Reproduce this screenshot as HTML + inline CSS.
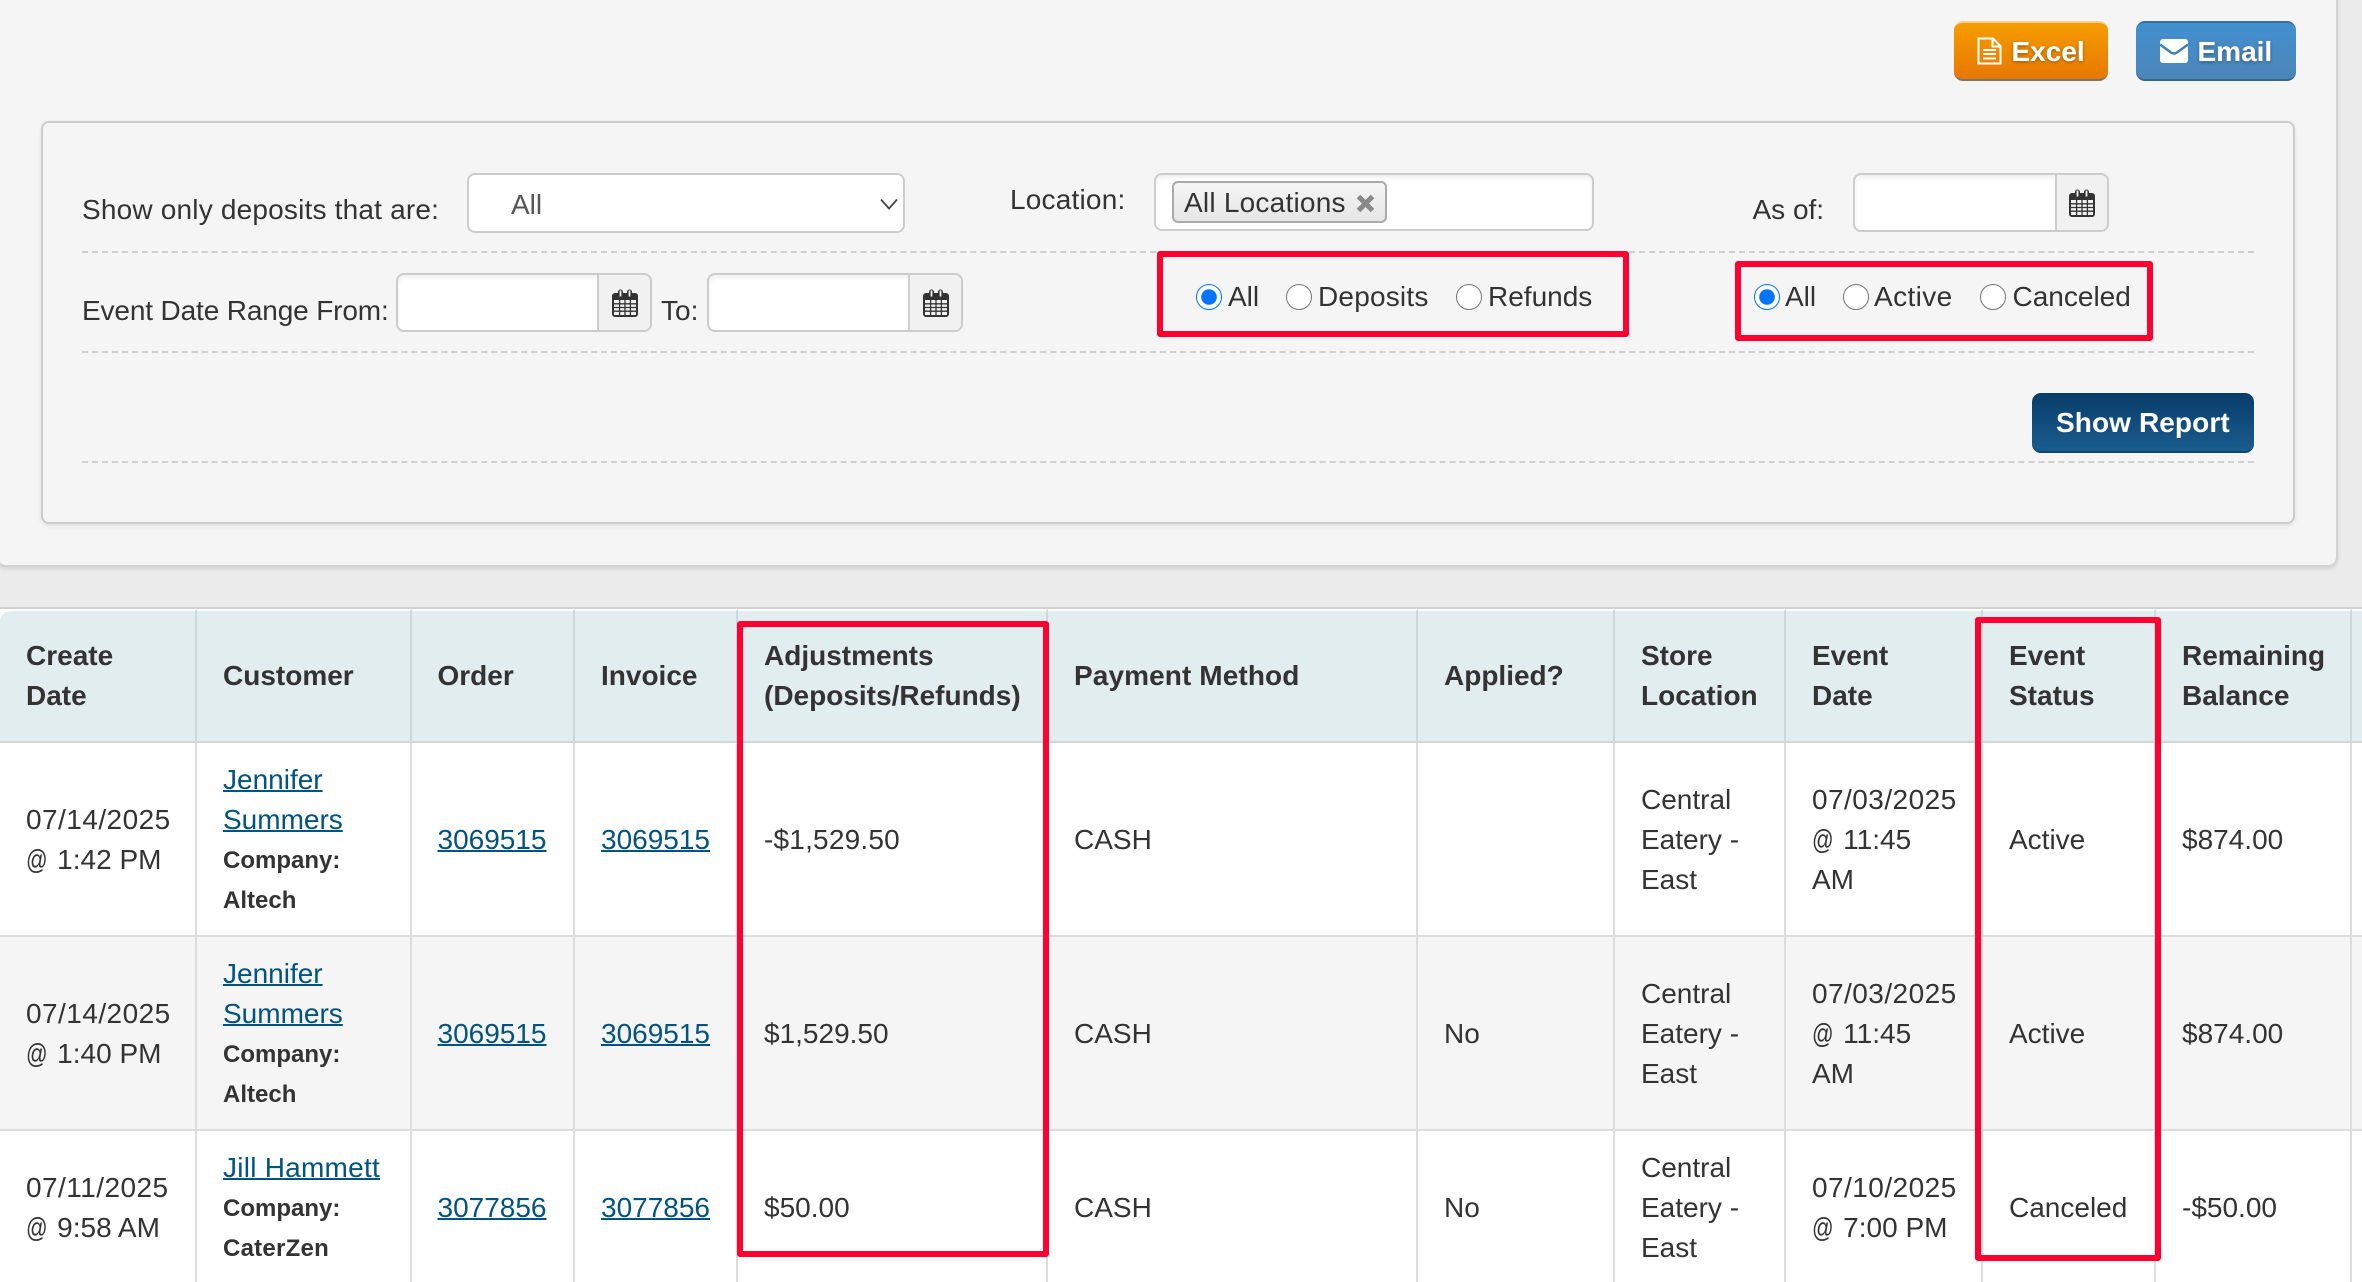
<!DOCTYPE html>
<html lang="en">
<head>
<meta charset="utf-8">
<title>Deposits Report</title>
<style>
html,body{margin:0;padding:0;width:2362px;height:1282px;overflow:hidden;background:#ebebeb}
body{position:relative;font-family:"Liberation Sans",Helvetica,Arial,sans-serif;font-size:28px;line-height:40px;color:#333}
.abs{position:absolute}
.t{position:absolute;white-space:nowrap;line-height:40px}
#panel{position:absolute;left:-4px;top:-4px;width:2338px;height:567px;background:#f5f5f5;border:2px solid #d2d2d2;border-radius:0 0 10px 10px;box-shadow:0 2px 5px rgba(0,0,0,.1)}
#box{position:absolute;left:41px;top:121px;width:2250px;height:399px;background:#f5f5f5;border:2px solid #ccc;border-radius:8px;box-shadow:0 2px 5px rgba(0,0,0,.08)}
.btn{position:absolute;box-sizing:border-box;height:60px;border-radius:9px;color:#fff;font-weight:bold;text-shadow:0 1px 3px rgba(0,0,0,.4),0 0 1px rgba(255,255,255,.5)}
.input{position:absolute;box-sizing:border-box;background:#fff;border:2px solid #ccc;border-radius:8px;box-shadow:inset 0 3px 4px rgba(0,0,0,.06)}
.addon{position:absolute;top:0;right:0;bottom:0;background:#f1f1f1;border-left:2px solid #ccc;border-radius:0 6px 6px 0}
.addon svg{position:absolute;left:50%;top:50%;margin:-14px 0 0 -13px}
.dash{position:absolute;left:82px;width:2172px;height:0;border-top:2px dashed #cfcfcf}
input[type=radio]{position:absolute;margin:0;width:26px;height:26px;accent-color:#0075ff}
.red{position:absolute;box-sizing:border-box;border:6px solid #ff0030;border-radius:3px;z-index:5}
#tw{position:absolute;left:0;top:607px;width:2362px;height:675px;overflow:hidden;border-top:2px solid #d0d0d0;box-sizing:border-box}
table{border-collapse:separate;border-spacing:0;table-layout:fixed;width:2362px;background:#fff}
th,td{box-sizing:border-box;text-align:left;vertical-align:middle;padding:1px 8px 0 26px;line-height:40px}
th{height:134px;padding:0 8px 1px 26px;background:#e2edef;border-top:2px solid #fff;border-right:2px solid #ccd8da;border-bottom:2px solid #ccd8da;font-weight:bold}
th:first-child{border-top-left-radius:12px}
td{border-right:2px solid #ddd;border-bottom:2px solid #ddd}
th:nth-child(3),td:nth-child(3){padding-left:25.5px}
tr.a td{height:194px;background:#fff}
tr.b td{height:194px;background:#f5f5f5}
tr.c td{height:152px;background:#fff;border-bottom:0}
th:last-child,td:last-child{border-right:0}
td a{color:#00547f;text-decoration:underline;text-decoration-thickness:2px}
td b{font-size:24px;display:block;position:relative;top:1px}
.d{letter-spacing:.45px}
.at{display:inline-block;width:23.4px;transform:scaleX(.76);transform-origin:0 50%}
</style>
</head>
<body>
<svg width="0" height="0" style="position:absolute">
<symbol id="cal" viewBox="0 0 26 28">
<path fill="#333" d="M3 4h3V3a2.5 2.5 0 0 1 5 0v1h4V3a2.5 2.5 0 0 1 5 0v1h3a3 3 0 0 1 3 3v18a3 3 0 0 1-3 3H3a3 3 0 0 1-3-3V7a3 3 0 0 1 3-3z"/>
<path fill="#f1f1f1" d="M7.6 1.5h1.8v6H7.6zM16.6 1.5h1.8v6h-1.8z"/>
<path fill="#f1f1f1" d="M2 11h22v15H2z"/>
<path stroke="#333" stroke-width="1.3" fill="none" d="M7.6 11v15M13 11v15M18.4 11v15M2 14.8h22M2 18.5h22M2 22.2h22"/>
</symbol>
</svg>

<div id="panel"></div>

<div class="btn" style="left:1954px;top:21px;width:154px;background:linear-gradient(#f59d00,#e77800);border-top:2px solid #f8cf8e;border-bottom:2px solid #7d7468">
<svg class="abs" style="left:23px;top:14px" width="25" height="28" viewBox="0 0 25 28" fill="none" stroke="#fff" stroke-width="2"><path d="M1.5 1.5h14.5l7.5 7.5v17.5h-22z"/><path d="M15.5 1.5v8h8"/><path d="M6 13h13M6 17h13M6 21.500h13"/></svg>
<span class="t" style="left:57.500px;top:8.500px">Excel</span></div>

<div class="btn" style="left:2136px;top:21px;width:160px;background:linear-gradient(#4290d0,#4d85b8);border-top:2px solid #3a6e9e;border-bottom:2px solid #36658f">
<svg class="abs" style="left:24px;top:16px" width="28" height="24" viewBox="0 0 28 24"><rect width="28" height="24" rx="3" fill="#fff"/><path d="M0 5.500L11 13.500Q14 15.500 17 13.500L28 5.500" fill="none" stroke="#3f7fb5" stroke-width="2.500"/></svg>
<span class="t" style="left:61.500px;top:8.500px">Email</span></div>

<div id="box"></div>

<span class="t" style="left:82px;top:189.500px;letter-spacing:.19px">Show only deposits that are:</span>
<div class="input" style="left:467px;top:173px;width:438px;height:60px;box-shadow:none">
<span class="t" style="left:42px;top:10px;color:#555">All</span>
<svg class="abs" style="left:411px;top:23px" width="18" height="12" viewBox="0 0 18 12"><path d="M1 1.500L9 10.500L17 1.500" fill="none" stroke="#444" stroke-width="1.800"/></svg>
</div>

<span class="t" style="left:1010px;top:179.500px;letter-spacing:.2px">Location:</span>
<div class="input" style="left:1154px;top:173px;width:440px;height:58px">
<div class="abs" style="left:16px;top:6px;width:215px;height:42px;box-sizing:border-box;background:linear-gradient(#f5f5f5,#e6e6e6);border:2px solid #aaa;border-radius:6px">
<span class="t" style="left:10px;top:-.5px;letter-spacing:.23px">All Locations</span>
<svg class="abs" style="left:182px;top:11px" width="19" height="19" viewBox="0 0 19 19"><path d="M2.500 2.500L16.500 16.500M16.500 2.500L2.500 16.500" stroke="#888" stroke-width="5"/></svg>
</div></div>

<span class="t" style="left:1752.500px;top:190px">As of:</span>
<div class="input" style="left:1853px;top:173px;width:256px;height:59px"><div class="addon" style="width:50px"><svg width="26" height="28"><use href="#cal"/></svg></div></div>

<div class="dash" style="top:251px"></div>

<span class="t" style="left:82px;top:290.500px;letter-spacing:-.14px">Event Date Range From:</span>
<div class="input" style="left:396px;top:273px;width:256px;height:59px"><div class="addon" style="width:51px"><svg width="26" height="28"><use href="#cal"/></svg></div></div>
<span class="t" style="left:661px;top:290.500px">To:</span>
<div class="input" style="left:707px;top:273px;width:256px;height:59px"><div class="addon" style="width:51px"><svg width="26" height="28"><use href="#cal"/></svg></div></div>

<input type="radio" name="r1" checked style="left:1196px;top:284px">
<span class="t" style="left:1228px;top:277px">All</span>
<input type="radio" name="r1" style="left:1286px;top:284px">
<span class="t" style="left:1318px;top:277px;letter-spacing:.2px">Deposits</span>
<input type="radio" name="r1" style="left:1456px;top:284px">
<span class="t" style="left:1488px;top:277px">Refunds</span>

<input type="radio" name="r2" checked style="left:1754px;top:284px">
<span class="t" style="left:1785px;top:277px">All</span>
<input type="radio" name="r2" style="left:1843px;top:284px">
<span class="t" style="left:1874px;top:277px;letter-spacing:.4px">Active</span>
<input type="radio" name="r2" style="left:1980px;top:284px">
<span class="t" style="left:2012.500px;top:277px">Canceled</span>

<div class="dash" style="top:351px"></div>

<div class="btn" style="left:2032px;top:393px;width:222px;background:linear-gradient(#083c69,#1a5c8f);border-bottom:2px solid #0c4470;text-shadow:none"><span class="t" style="left:24px;top:10px;letter-spacing:.1px">Show Report</span></div>

<div class="dash" style="top:461px"></div>

<div id="tw">
<table>
<colgroup><col style="width:197px"><col style="width:215px"><col style="width:163px"><col style="width:163px"><col style="width:310px"><col style="width:370px"><col style="width:197px"><col style="width:171px"><col style="width:197px"><col style="width:173px"><col style="width:196px"><col style="width:10px"></colgroup>
<tr><th>Create<br>Date</th><th>Customer</th><th>Order</th><th>Invoice</th><th>Adjustments<br>(Deposits/Refunds)</th><th style="letter-spacing:.1px">Payment Method</th><th>Applied?</th><th>Store<br>Location</th><th>Event<br>Date</th><th>Event<br>Status</th><th style="white-space:nowrap">Remaining<br>Balance</th><th></th></tr>
<tr class="a"><td><span class="d">07/14/2025</span><br><span class="at">@</span> 1:42 PM</td><td><a href="#">Jennifer<br>Summers</a><b>Company:</b><b>Altech</b></td><td><a href="#">3069515</a></td><td><a href="#">3069515</a></td><td style="letter-spacing:.2px">-$1,529.50</td><td>CASH</td><td></td><td>Central<br>Eatery -<br>East</td><td><span class="d">07/03/2025</span><br><span class="at">@</span> 11:45<br>AM</td><td>Active</td><td>$874.00</td><td></td></tr>
<tr class="b"><td><span class="d">07/14/2025</span><br><span class="at">@</span> 1:40 PM</td><td><a href="#">Jennifer<br>Summers</a><b>Company:</b><b>Altech</b></td><td><a href="#">3069515</a></td><td><a href="#">3069515</a></td><td>$1,529.50</td><td>CASH</td><td>No</td><td>Central<br>Eatery -<br>East</td><td><span class="d">07/03/2025</span><br><span class="at">@</span> 11:45<br>AM</td><td>Active</td><td>$874.00</td><td></td></tr>
<tr class="c"><td><span class="d">07/11/2025</span><br><span class="at">@</span> 9:58 AM</td><td><a href="#" style="letter-spacing:.25px">Jill Hammett</a><b>Company:</b><b style="letter-spacing:.25px">CaterZen</b></td><td><a href="#">3077856</a></td><td><a href="#">3077856</a></td><td>$50.00</td><td>CASH</td><td>No</td><td>Central<br>Eatery -<br>East</td><td><span class="d">07/10/2025</span><br><span class="at">@</span> 7:00 PM</td><td>Canceled</td><td>-$50.00</td><td></td></tr>
</table>
</div>

<div class="red" style="left:1157px;top:251px;width:472px;height:86px"></div>
<div class="red" style="left:1735px;top:261px;width:418px;height:80px"></div>
<div class="red" style="left:737px;top:621px;width:312px;height:636px"></div>
<div class="red" style="left:1975px;top:617px;width:186px;height:644px"></div>
</body>
</html>
